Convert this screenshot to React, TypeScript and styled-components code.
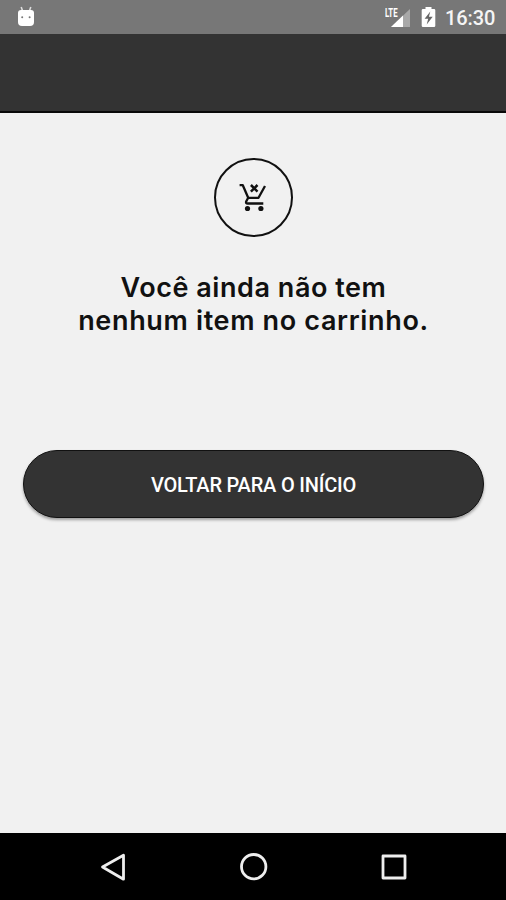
import React from "react";
import styled, { createGlobalStyle } from "styled-components";

const GlobalStyle = createGlobalStyle`
  * { box-sizing: border-box; }
  body { margin: 0; background: #f1f1f1; }
`;

const Screen = styled.div`
  width: 506px;
  height: 900px;
  display: flex;
  flex-direction: column;
  background: #f1f1f1;
  overflow: hidden;
  font-family: Roboto, sans-serif;
`;

const StatusBar = styled.header`
  height: 34px;
  flex: none;
  display: flex;
  align-items: center;
  justify-content: space-between;
  padding: 0 11px 0 17px;
  background: #777777;
  color: #ffffff;
`;

const StatusGroup = styled.div`
  display: flex;
  align-items: center;
`;

const Clock = styled.time`
  margin-left: 9px;
  padding-top: 2px;
  font-size: 20px;
  line-height: 24px;
  font-weight: 500;
  letter-spacing: -0.1px;
  color: #f5f5f5;
  width: 50px;
  white-space: nowrap;
`;

const Network = styled.div`
  display: flex;
  margin-right: 10px;
  position: relative;
`;

const NetworkType = styled.span`
  position: absolute;
  left: 0;
  top: 0;
  font-size: 13px;
  line-height: 13px;
  font-weight: 700;
  transform: scaleX(0.6);
  transform-origin: left;
`;

const AppBar = styled.div`
  height: 79px;
  flex: none;
  background: #333333;
  border-bottom: 2px solid #090909;
`;

const Content = styled.main`
  flex: 1;
  display: flex;
  flex-direction: column;
  align-items: center;
  padding: 45px 22px 0 23px;
`;

const CartBadge = styled.div`
  width: 79px;
  height: 79px;
  flex: none;
  display: flex;
  align-items: center;
  justify-content: center;
  border: 2px solid #111111;
  border-radius: 50%;
`;

const Message = styled.h1`
  margin: 34px 0 0;
  text-align: center;
  font-family: Inter, sans-serif;
  font-size: 27px;
  line-height: 33px;
  font-weight: 600;
  color: #111111;
`;

const Line = styled.span<{ $spacing: number }>`
  display: block;
  white-space: nowrap;
  letter-spacing: ${(p) => p.$spacing}px;
`;

const HomeButton = styled.button`
  margin-top: 113px;
  width: 461px;
  height: 68px;
  flex: none;
  padding: 2px 0 0;
  border: 1.5px solid #111111;
  border-radius: 34px;
  background: #333333;
  box-shadow: 0 2px 3px rgba(0, 0, 0, 0.35);
  color: #ffffff;
  font-family: Roboto, sans-serif;
  font-size: 20px;
  font-weight: 500;
  letter-spacing: -0.2px;
`;

const NavBar = styled.nav`
  height: 67px;
  flex: none;
  display: flex;
  justify-content: space-between;
  align-items: center;
  padding: 0 96px 0 97px;
  background: #000000;
`;

const NavIcon = styled.svg`
  width: 32px;
  height: 32px;
  fill: none;
  stroke: #eeeeee;
  stroke-width: 2.8;
  stroke-linejoin: round;
`;

const AndroidIcon = () => (
  <svg width="18" height="22" viewBox="0 0 18 22">
    <path d="M4.200 1 5.600 5M13.800 1 12.400 5" stroke="#ddd" strokeWidth="1.600" />
    <path d="M4 4h10q3 0 3 3v9q0 4-4 4H5q-4 0-4-4V7q0-3 3-3z" fill="#fff" />
    <circle cx="5.200" cy="11.300" r="1" fill="#777" />
    <circle cx="12.600" cy="11.300" r="1" fill="#777" />
  </svg>
);

const SignalIcon = () => (
  <svg width="26" height="22" viewBox="0 0 26 22">
    <path d="M25 3v18H6z" fill="#a8a8a8" />
    <path d="M18 9.500V21H6z" fill="#fff" />
  </svg>
);

const BatteryIcon = () => (
  <svg width="15" height="22" viewBox="0 0 15 22">
    <path d="M4.500 1h6v2H13q1.300 0 1.300 1.300v15.400Q14.300 21 13 21H2Q.7 21 .7 19.700V4.300Q.7 3 2 3h2.500z" fill="#fff" />
    <path d="M9.300 5.500 3.600 12.800h3.600L5.700 18.500l6-7.700H7.900z" fill="#666" />
  </svg>
);

const CartIcon = () => (
  <svg width="32" height="32" viewBox="0 0 32 32" fill="none" stroke="#111" strokeWidth="2.300">
    <path d="M1.600 3.200H4.800L10.200 15.800H20.500L27 4" strokeLinejoin="round" />
    <path d="M10.200 15.800 8.200 19.400Q7.500 21.500 9.700 21.500H25.300" />
    <path d="m12.900 3 6.600 6.600m0-6.600-6.600 6.600" strokeWidth="2.500" />
    <circle cx="9.500" cy="26.500" r="2.600" fill="#111" stroke="none" />
    <circle cx="22.900" cy="26.500" r="2.600" fill="#111" stroke="none" />
  </svg>
);

export default function App() {
  return (
    <>
      <GlobalStyle />
      <Screen>
        <StatusBar>
          <AndroidIcon />
          <StatusGroup>
            <Network>
              <NetworkType>LTE</NetworkType>
              <SignalIcon />
            </Network>
            <BatteryIcon />
            <Clock>16:30</Clock>
          </StatusGroup>
        </StatusBar>
        <AppBar />
        <Content>
          <CartBadge>
            <CartIcon />
          </CartBadge>
          <Message>
            <Line $spacing={0.55}>Você ainda não tem</Line>
            <Line $spacing={0.65}>nenhum item no carrinho.</Line>
          </Message>
          <HomeButton>VOLTAR PARA O INÍCIO</HomeButton>
        </Content>
        <NavBar>
          <NavIcon viewBox="0 0 32 32">
            <path d="M5.500 16 26.500 4.200v24z" />
          </NavIcon>
          <NavIcon viewBox="0 0 32 32">
            <circle cx="15.700" cy="15.700" r="12.200" />
          </NavIcon>
          <NavIcon viewBox="0 0 32 32">
            <rect x="5" y="5" width="22" height="22" />
          </NavIcon>
        </NavBar>
      </Screen>
    </>
  );
}
